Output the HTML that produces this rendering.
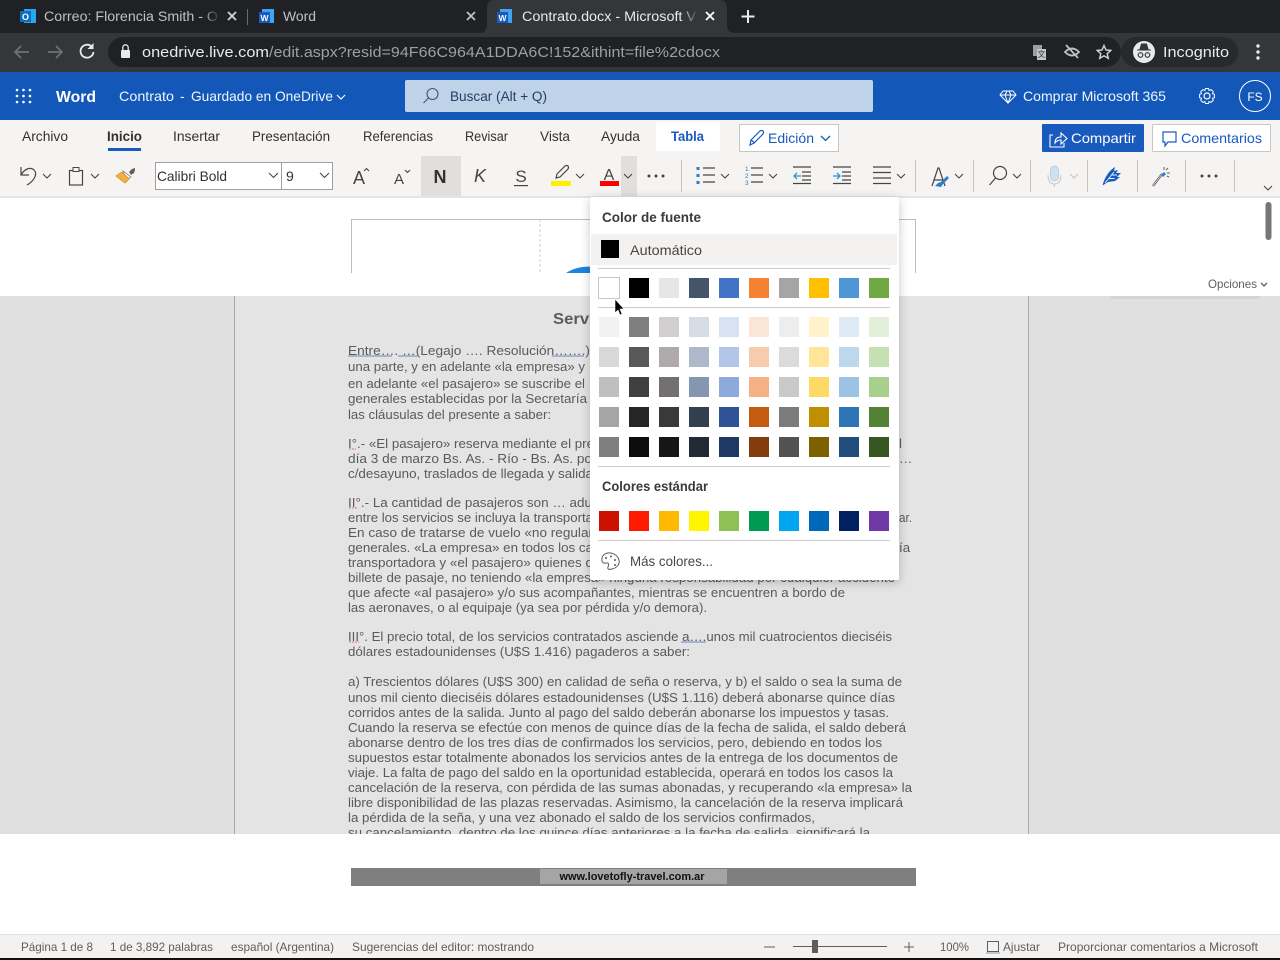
<!DOCTYPE html>
<html lang="es">
<head>
<meta charset="utf-8">
<title>Contrato.docx - Microsoft Word</title>
<style>
html,body{margin:0;padding:0;background:#fff;width:1280px;height:960px;overflow:hidden}
svg{display:block;font-family:"Liberation Sans",sans-serif}
.d{filter:blur(.3px)}
.d text{font-size:13.3px;fill:#5a5a5a}
.u{font-size:14px;fill:#323130}
.s{font-size:12px;fill:#605e5c}
.i{fill:none;stroke:#484644;stroke-width:1.2}
.c{fill:none;stroke:#484644;stroke-width:1.1}
.w{fill:none;stroke:#fff;stroke-width:1.2}
.g{fill:none;stroke:#c8c6c4;stroke-width:1}
</style>
</head>
<body>
<svg width="1280" height="960" viewBox="0 0 1280 960" xmlns="http://www.w3.org/2000/svg">
<defs>
<linearGradient id="f1"><stop offset="0" stop-color="#202124" stop-opacity="0"/><stop offset="1" stop-color="#202124"/></linearGradient>
<linearGradient id="f2"><stop offset="0" stop-color="#35363a" stop-opacity="0"/><stop offset="1" stop-color="#35363a"/></linearGradient>
</defs>
<!-- browser chrome -->
<rect width="1280" height="33" fill="#202124"/>
<rect y="33" width="1280" height="39" fill="#35363a"/>
<path d="M479 33q8 0 8-8V8q0-8 8-8h224q8 0 8 8v17q0 8 8 8z" fill="#35363a"/>
<rect x="247" y="9" width="1" height="16" fill="#6b6c6f"/>
<!-- tab 1 -->
<rect x="24" y="9" width="12" height="14" fill="#28a8ea"/><rect x="20" y="11" width="11" height="11" fill="#0f6cbd"/>
<text x="25.500" y="20" font-size="9" font-weight="bold" fill="#fff" text-anchor="middle">O</text>
<text x="44" y="21" font-size="13.500" fill="#bdc1c6" textLength="174" lengthAdjust="spacingAndGlyphs">Correo: Florencia Smith - O</text>
<rect x="204" y="8" width="16" height="18" fill="url(#f1)"/>
<path d="M228 12l8 8M236 12l-8 8" stroke="#d5d6d8" stroke-width="1.800" fill="none"/>
<!-- tab 2 -->
<rect x="262" y="9" width="12" height="14" fill="#41a5ee"/><rect x="259" y="12" width="11" height="11" fill="#185abd"/>
<text x="264.500" y="21" font-size="8.500" font-weight="bold" fill="#fff" text-anchor="middle">W</text>
<text x="283" y="21" font-size="13.500" fill="#bdc1c6" textLength="33" lengthAdjust="spacingAndGlyphs">Word</text>
<path d="M467 12l8 8M475 12l-8 8" stroke="#bdc1c6" stroke-width="1.800" fill="none"/>
<!-- tab 3 -->
<rect x="500" y="9" width="12" height="14" fill="#41a5ee"/><rect x="497" y="12" width="11" height="11" fill="#185abd"/>
<text x="502.500" y="21" font-size="8.500" font-weight="bold" fill="#fff" text-anchor="middle">W</text>
<text x="522" y="21" font-size="13.500" fill="#e8eaed" textLength="174" lengthAdjust="spacingAndGlyphs">Contrato.docx - Microsoft V</text>
<rect x="682" y="8" width="16" height="18" fill="url(#f2)"/>
<path d="M706 12l8 8M714 12l-8 8" stroke="#fff" stroke-width="1.800" fill="none"/>
<path d="M748 10v13M741.500 16.500h13" stroke="#e8eaed" stroke-width="2" fill="none"/>
<!-- toolbar -->
<path d="M29 52H16M21 46l-6 6 6 6" fill="none" stroke="#707174" stroke-width="1.700"/>
<path d="M48 52h13M56 46l6 6-6 6" fill="none" stroke="#707174" stroke-width="1.700"/>
<path d="M92 47a6.500 6.500 0 1 0 1.500 5" fill="none" stroke="#e8eaed" stroke-width="1.800"/><path d="M93.500 43v6h-6z" fill="#e8eaed"/>
<rect x="108" y="37" width="1013" height="30" rx="15" fill="#202124"/>
<rect x="1121" y="37" width="117" height="30" rx="15" fill="#28292c"/>
<rect x="121" y="50" width="9" height="8" rx="1" fill="#e8eaed"/><path d="M122.800 50v-2.500a2.700 2.700 0 0 1 5.400 0V50" fill="none" stroke="#e8eaed" stroke-width="1.300"/>
<text x="142" y="57" font-size="15" fill="#e8eaed" textLength="127" lengthAdjust="spacingAndGlyphs">onedrive.live.com</text>
<text x="269" y="57" font-size="15" fill="#9aa0a6" textLength="451" lengthAdjust="spacingAndGlyphs">/edit.aspx?resid=94F66C964A1DDA6C!152&amp;ithint=file%2cdocx</text>
<!-- translate / eye / star -->
<rect x="1033" y="45" width="9" height="11" fill="#9aa0a6"/><rect x="1037" y="49" width="9" height="11" fill="#c4c7ca"/><text x="1037.500" y="57" font-size="8" fill="#35363a" style="font-family:'Liberation Sans','Noto Sans CJK SC',sans-serif">文</text>
<path d="M1065 52q7-7 14 0q-7 7-14 0zM1066 45l12 13" fill="none" stroke="#bdc1c6" stroke-width="1.800"/>
<path d="M1104 45.500l2 4.500 4.800.4-3.600 3.200 1.100 4.700-4.300-2.500-4.300 2.500 1.100-4.700-3.600-3.200 4.800-.4z" fill="none" stroke="#d5d6d8" stroke-width="1.400"/>
<circle cx="1144" cy="52" r="11" fill="#e8eaed"/>
<path d="M1137 50h14M1140 49l1.500-5h5l1.500 5z" fill="#35363a" stroke="#35363a"/><circle cx="1140.500" cy="55" r="2.300" fill="none" stroke="#35363a" stroke-width="1.200"/><circle cx="1147.500" cy="55" r="2.300" fill="none" stroke="#35363a" stroke-width="1.200"/>
<text x="1163" y="57" font-size="15" fill="#e8eaed" textLength="66" lengthAdjust="spacingAndGlyphs">Incognito</text>
<circle cx="1258" cy="46" r="1.700" fill="#e8eaed"/><circle cx="1258" cy="52" r="1.700" fill="#e8eaed"/><circle cx="1258" cy="58" r="1.700" fill="#e8eaed"/>
<!-- word blue bar -->
<rect y="72" width="1280" height="48" fill="#1358b8"/>
<g fill="#fff"><circle cx="17" cy="90" r="1.300"/><circle cx="23.500" cy="90" r="1.300"/><circle cx="30" cy="90" r="1.300"/><circle cx="17" cy="96" r="1.300"/><circle cx="23.500" cy="96" r="1.300"/><circle cx="30" cy="96" r="1.300"/><circle cx="17" cy="102" r="1.300"/><circle cx="23.500" cy="102" r="1.300"/><circle cx="30" cy="102" r="1.300"/></g>
<text x="56" y="102" font-size="16" font-weight="bold" fill="#fff" textLength="40" lengthAdjust="spacingAndGlyphs">Word</text>
<text x="119" y="101" font-size="14" fill="#f0f5fb" textLength="55" lengthAdjust="spacingAndGlyphs">Contrato</text>
<text x="180" y="101" font-size="14" fill="#f0f5fb">-</text>
<text x="191" y="101" font-size="14" fill="#f0f5fb" textLength="142" lengthAdjust="spacingAndGlyphs">Guardado en OneDrive</text>
<path d="M337 95l4 4 4-4" class="w"/>
<rect x="405" y="80" width="468" height="32" rx="2" fill="#bfd3e8"/>
<circle cx="432.500" cy="94" r="5.500" fill="none" stroke="#44546a" stroke-width="1.100"/><path d="M428.500 98l-5 5" stroke="#44546a" stroke-width="1.100"/>
<text x="450" y="101" font-size="13.500" fill="#243d63" textLength="97" lengthAdjust="spacingAndGlyphs">Buscar (Alt + Q)</text>
<path d="M1003 91h10l3 4-8 8-8-8zM1000 95h16M1005 95l3 8 3-8M1005 95l2-4M1011 95l-2-4" fill="none" stroke="#fff" stroke-width="1"/>
<text x="1023" y="101" font-size="14" fill="#f0f5fb" textLength="143" lengthAdjust="spacingAndGlyphs">Comprar Microsoft 365</text>
<circle cx="1207" cy="96" r="3" class="w"/><path d="M1205.500 88.500h3l.6 2 2-.9 2.200 2.100-.9 2 2 .6v3.400l-2 .6.9 2-2.200 2.100-2-.9-.6 2h-3l-.6-2-2 .9-2.200-2.100.9-2-2-.6v-3.400l2-.6-.9-2 2.200-2.100 2 .9z" fill="none" stroke="#fff" stroke-width="1"/>
<circle cx="1255" cy="96" r="15.500" fill="#1358b8" stroke="#fff" stroke-width="1"/>
<text x="1255" y="101" font-size="12" fill="#fff" text-anchor="middle">FS</text>
<!-- ribbon -->
<rect y="120" width="1280" height="77" fill="#f5f4f2"/>
<rect y="196" width="1280" height="2" fill="#e6e5e3"/>
<rect x="656" y="122" width="64" height="29" fill="#fff"/>
<text class="u" x="22" y="141" textLength="46" lengthAdjust="spacingAndGlyphs">Archivo</text>
<text class="u" x="107" y="141" textLength="35" lengthAdjust="spacingAndGlyphs" style="font-weight:600">Inicio</text>
<rect x="108" y="148" width="33" height="3" fill="#185abd"/>
<text class="u" x="173" y="141" textLength="47" lengthAdjust="spacingAndGlyphs">Insertar</text>
<text class="u" x="252" y="141" textLength="78" lengthAdjust="spacingAndGlyphs">Presentación</text>
<text class="u" x="363" y="141" textLength="70" lengthAdjust="spacingAndGlyphs">Referencias</text>
<text class="u" x="465" y="141" textLength="43" lengthAdjust="spacingAndGlyphs">Revisar</text>
<text class="u" x="540" y="141" textLength="30" lengthAdjust="spacingAndGlyphs">Vista</text>
<text class="u" x="601" y="141" textLength="39" lengthAdjust="spacingAndGlyphs">Ayuda</text>
<text x="671" y="141" font-size="14" font-weight="bold" fill="#185abd" textLength="33" lengthAdjust="spacingAndGlyphs">Tabla</text>
<rect x="739.500" y="124.500" width="99" height="27" fill="#fff" stroke="#c8c6c4"/>
<path d="M750 145l1-5 9-9q2-1 3 0t0 3l-9 9zM751 140l4 3" fill="none" stroke="#185abd" stroke-width="1.200"/>
<text x="768" y="143" font-size="14" fill="#185abd" textLength="46" lengthAdjust="spacingAndGlyphs">Edición</text>
<path d="M821 136l4.500 4.500 4.500-4.500" fill="none" stroke="#185abd" stroke-width="1.300"/>
<rect x="1042" y="124" width="102" height="28" rx="1" fill="#185abd"/>
<path d="M1053 135h-3v12h14v-4M1055 143q0-6 6-6v-4l6 5.500-6 5.500v-4q-4 0-6 3z" fill="none" stroke="#fff" stroke-width="1.100"/>
<text x="1071" y="143" font-size="14" fill="#fff" textLength="65" lengthAdjust="spacingAndGlyphs">Compartir</text>
<rect x="1152.500" y="124.500" width="118" height="27" rx="1" fill="#fff" stroke="#c8c6c4"/>
<path d="M1163 132h13v10h-8l-3 4v-4h-2z" fill="none" stroke="#185abd" stroke-width="1.200"/>
<text x="1181" y="143" font-size="14" fill="#185abd" textLength="81" lengthAdjust="spacingAndGlyphs">Comentarios</text>
<!-- toolbar icons -->
<path d="M21 167v8h8M21 175C25 168 31 167 34 170C38 174 34 181 27 185" class="i"/>
<rect x="155.500" y="162.500" width="126" height="27" fill="#fff" stroke="#a19f9d"/>
<rect x="281.500" y="162.500" width="51" height="27" fill="#fff" stroke="#a19f9d"/>
<rect x="621" y="156" width="16" height="40" fill="#e1dfdd"/>
<path d="M43 174l4 4 4-4M91 174l4 4 4-4M269 173l4.500 4.500 4.500-4.500M320 173l4.500 4.500 4.500-4.500M576 174l4 4 4-4M624 174l4 4 4-4M721 174l4 4 4-4M769 174l4 4 4-4M897 174l4 4 4-4M955 174l4 4 4-4M1013 174l4 4 4-4" class="c"/>
<path d="M1070 174l4 4 4-4" fill="none" stroke="#c8c6c4" stroke-width="1.100"/>
<path d="M1264 186l4 4 4-4" class="c"/>
<rect x="69.500" y="170.500" width="13" height="14.500" class="i"/><rect x="73" y="167.500" width="6" height="4" fill="#f5f4f2" stroke="#484644"/>
<path d="M129 172l3-3 3-1v2l-1 3-3 2z" fill="#605e5c"/><path d="M123 171l8 6-5 3z" fill="#fff" stroke="#8a8886" stroke-width=".8"/><path d="M122 172l7 7-4 4-9-7z" fill="#f5b041" stroke="#d98e1f" stroke-width=".8"/>
<text class="u" x="157" y="181" textLength="70" lengthAdjust="spacingAndGlyphs">Calibri Bold</text>
<text class="u" x="286" y="181">9</text>
<text x="353" y="184" font-size="18" fill="#484644">A</text><path d="M364 171l2.500-2.500 2.500 2.500" class="c"/>
<text x="394" y="184" font-size="15" fill="#484644">A</text><path d="M405 170l2.500 2.500 2.500-2.500" class="c"/>
<rect x="421" y="156" width="40" height="40" fill="#e1dfdd"/>
<text x="440" y="183" font-size="18" font-weight="bold" fill="#323130" text-anchor="middle">N</text>
<text x="480" y="182" font-size="18" font-style="italic" fill="#484644" text-anchor="middle">K</text>
<text x="521" y="182" font-size="17" fill="#484644" text-anchor="middle">S</text><rect x="514" y="185" width="14" height="1.200" fill="#484644"/>
<path d="M556 178l1-4 8-8q2-1 3 0t0 3l-8 8z" class="i"/><rect x="551" y="181" width="20" height="5" fill="#ffee00"/>
<text x="609" y="180" font-size="16" fill="#484644" text-anchor="middle">A</text><rect x="600" y="181" width="19" height="5" fill="#f00"/>
<g fill="#484644"><circle cx="649" cy="176" r="1.500"/><circle cx="656" cy="176" r="1.500"/><circle cx="663" cy="176" r="1.500"/><circle cx="1202" cy="176" r="1.500"/><circle cx="1209" cy="176" r="1.500"/><circle cx="1216" cy="176" r="1.500"/></g>
<path d="M681.500 160v32M915.500 160v32M973.500 160v32M1030.500 160v32M1087.500 160v32M1137.500 160v32M1185.500 160v32M1234.500 160v32" class="g"/>
<path d="M703 168h12M703 175h12M703 182h12" class="i"/><rect x="696.500" y="167" width="3" height="3" fill="#2b7cd3"/><rect x="696.500" y="174" width="3" height="3" fill="#2b7cd3"/><rect x="696.500" y="181" width="3" height="3" fill="#2b7cd3"/>
<path d="M751 168h12M751 175h12M751 182h12" class="i"/><text x="745" y="171" font-size="6.500" fill="#2b7cd3">1</text><text x="745" y="178" font-size="6.500" fill="#2b7cd3">2</text><text x="745" y="185" font-size="6.500" fill="#2b7cd3">3</text>
<path d="M793 167h18M802 172h9M802 176h9M802 180h9M793 183.500h18" class="i"/><path d="M801 176h-7M797 173l-3 3 3 3" fill="none" stroke="#2b95d3" stroke-width="1.300"/>
<path d="M833 167h18M842 172h9M842 176h9M842 180h9M833 183.500h18" class="i"/><path d="M833 176h7M837 173l3 3-3 3" fill="none" stroke="#2b95d3" stroke-width="1.300"/>
<path d="M873 167h18M873 172.500h18M873 178h18M873 183.500h18" class="i"/>
<path d="M932 186l6-18h1l6 18M934.500 180h9" class="i"/><path d="M935 186l3-3 3-1 6-6 2 2-6 6-2 3z" fill="#2b7cd3"/>
<circle cx="1000" cy="173" r="6.500" class="i"/><path d="M995.500 178l-6 7" class="i"/>
<rect x="1050.500" y="166" width="8" height="15" rx="4" fill="#cfe0ef" stroke="#bcd0e3"/><path d="M1048 175q0 9 6.500 9t6.500-9M1054.500 184v3" fill="none" stroke="#c8c6c4"/>
<path d="M1102.500 185.500C1105 176 1110 170 1115 167L1114 171L1118 170L1116 173L1121 173L1117 177L1120 177L1115 181L1108 182Z" fill="#185abd"/><path d="M1105 183l9-11M1111 175h6M1108.500 178.500h6" stroke="#f5f4f2" stroke-width=".9" fill="none"/>
<path d="M1153 186l9-12" stroke="#484644" stroke-width="2.200" fill="none"/><path d="M1153 186l9-12" stroke="#f5f4f2" stroke-width=".7" fill="none"/><path d="M1161 175l3-3 2 2-3 3z" fill="#2b7cd3"/><path d="M1164 167v3M1170 173h-3M1168 168l-2 2M1169 177l-2-1" fill="none" stroke="#605e5c"/>
<!-- document -->
<rect y="198" width="1280" height="98" fill="#fff"/>
<rect x="351.500" y="219.500" width="564" height="60" fill="#fff" stroke="#bdbdbd"/>
<rect x="350" y="273" width="568" height="8" fill="#fff"/>
<path d="M540 219v54" stroke="#cfcfcf" stroke-dasharray="3 2"/>
<path d="M566 273q12-8 30-6v6z" fill="#1b84e0"/>
<rect x="1265.500" y="202" width="6" height="38" rx="3" fill="#767676"/>
<text x="1208" y="288" font-size="12" fill="#605e5c" textLength="49" lengthAdjust="spacingAndGlyphs">Opciones</text>
<path d="M1261 283l3 3 3-3" fill="none" stroke="#605e5c" stroke-width="1.300"/>
<!-- grey page area -->
<rect y="296" width="1280" height="538" fill="#e0e0e0"/>
<rect x="235" y="296" width="793" height="538" fill="#e4e4e4"/>
<rect x="234" y="296" width="1" height="538" fill="#a8a8a8"/>
<rect x="1028" y="296" width="1" height="538" fill="#a8a8a8"/>
<rect x="1110" y="296" width="150" height="3" rx="2" fill="#d4d4d4"/>
<text x="553" y="324" font-size="16" font-weight="bold" fill="#5c5c5c" textLength="50" lengthAdjust="spacingAndGlyphs">Servic</text>
<g class="d">
<text x="348" y="355" textLength="242" lengthAdjust="spacingAndGlyphs">Entre…. …(Legajo …. Resolución…….)</text>
<text x="348" y="371" textLength="237" lengthAdjust="spacingAndGlyphs">una parte, y en adelante «la empresa» y</text>
<text x="348" y="388" textLength="237" lengthAdjust="spacingAndGlyphs">en adelante «el pasajero» se suscribe el</text>
<text x="348" y="403" textLength="239" lengthAdjust="spacingAndGlyphs">generales establecidas por la Secretaría</text>
<text x="348" y="419" textLength="203" lengthAdjust="spacingAndGlyphs">las cláusulas del presente a saber:</text>
<text x="348" y="448" textLength="246" lengthAdjust="spacingAndGlyphs">I°.- «El pasajero» reserva mediante el pre</text>
<text x="348" y="463" textLength="244" lengthAdjust="spacingAndGlyphs">día 3 de marzo Bs. As. - Río - Bs. As. po</text>
<text x="348" y="478" textLength="245" lengthAdjust="spacingAndGlyphs">c/desayuno, traslados de llegada y salida</text>
<text x="348" y="507" textLength="244" lengthAdjust="spacingAndGlyphs">II°.- La cantidad de pasajeros son … adu</text>
<text x="348" y="522" textLength="245" lengthAdjust="spacingAndGlyphs">entre los servicios se incluya la transporta</text>
<text x="348" y="537" textLength="245" lengthAdjust="spacingAndGlyphs">En caso de tratarse de vuelo «no regular</text>
<text x="348" y="552" textLength="245" lengthAdjust="spacingAndGlyphs">generales. «La empresa» en todos los ca</text>
<text x="348" y="567" textLength="245" lengthAdjust="spacingAndGlyphs">transportadora y «el pasajero» quienes q</text>
<text x="348" y="582" textLength="547" lengthAdjust="spacingAndGlyphs">billete de pasaje, no teniendo «la empresa» ninguna responsabilidad por cualquier accidente</text>
<text x="348" y="597" textLength="497" lengthAdjust="spacingAndGlyphs">que afecte «al pasajero» y/o sus acompañantes, mientras se encuentren a bordo de</text>
<text x="348" y="612" textLength="359" lengthAdjust="spacingAndGlyphs">las aeronaves, o al equipaje (ya sea por pérdida y/o demora).</text>
<text x="348" y="641" textLength="544" lengthAdjust="spacingAndGlyphs">III°. El precio total, de los servicios contratados asciende a….unos mil cuatrocientos dieciséis</text>
<text x="348" y="656" textLength="342" lengthAdjust="spacingAndGlyphs">dólares estadounidenses (U$S 1.416) pagaderos a saber:</text>
<text x="348" y="686" textLength="554" lengthAdjust="spacingAndGlyphs">a) Trescientos dólares (U$S 300) en calidad de seña o reserva, y b) el saldo o sea la suma de</text>
<text x="348" y="702" textLength="547" lengthAdjust="spacingAndGlyphs">unos mil ciento dieciséis dólares estadounidenses (U$S 1.116) deberá abonarse quince días</text>
<text x="348" y="717" textLength="541" lengthAdjust="spacingAndGlyphs">corridos antes de la salida. Junto al pago del saldo deberán abonarse los impuestos y tasas.</text>
<text x="348" y="732" textLength="558" lengthAdjust="spacingAndGlyphs">Cuando la reserva se efectúe con menos de quince días de la fecha de salida, el saldo deberá</text>
<text x="348" y="747" textLength="534" lengthAdjust="spacingAndGlyphs">abonarse dentro de los tres días de confirmados los servicios, pero, debiendo en todos los</text>
<text x="348" y="762" textLength="550" lengthAdjust="spacingAndGlyphs">supuestos estar totalmente abonados los servicios antes de la entrega de los documentos de</text>
<text x="348" y="777" textLength="545" lengthAdjust="spacingAndGlyphs">viaje. La falta de pago del saldo en la oportunidad establecida, operará en todos los casos la</text>
<text x="348" y="792" textLength="564" lengthAdjust="spacingAndGlyphs">cancelación de la reserva, con pérdida de las sumas abonadas, y recuperando «la empresa» la</text>
<text x="348" y="807" textLength="555" lengthAdjust="spacingAndGlyphs">libre disponibilidad de las plazas reservadas. Asimismo, la cancelación de la reserva implicará</text>
<text x="348" y="822" textLength="467" lengthAdjust="spacingAndGlyphs">la pérdida de la seña, y una vez abonado el saldo de los servicios confirmados,</text>
<text x="348" y="837" textLength="522" lengthAdjust="spacingAndGlyphs">su cancelamiento, dentro de los quince días anteriores a la fecha de salida, significará la</text>
<text x="899" y="448">l</text>
<text x="899" y="463">…</text>
<text x="899" y="522" textLength="13" lengthAdjust="spacingAndGlyphs">ar.</text>
<text x="899" y="552">ía</text>
</g>
<path d="M348 356h44M398 356h21M552 356h32M681 642h25" stroke="#6f7fc0" stroke-width="1"/>
<path d="M349 449h7M349 508h9M349 642h10" stroke="#d87070" stroke-width="1" stroke-dasharray="2 1"/>
<!-- bottom white area -->
<rect y="834" width="1280" height="101" fill="#fff"/>
<rect x="351" y="868" width="565" height="18" fill="#7f7f7f"/>
<rect x="540" y="869" width="187" height="15" fill="#a5a5a5"/>
<text x="632" y="880" font-size="11" font-weight="bold" fill="#111" text-anchor="middle" textLength="145" lengthAdjust="spacingAndGlyphs">www.lovetofly-travel.com.ar</text>
<!-- status bar -->
<rect y="935" width="1280" height="25" fill="#f3f2f1"/>
<rect y="934" width="1280" height="1" fill="#e1dfdd"/>
<rect y="958" width="1280" height="2" fill="#111"/>
<text class="s" x="21" y="951" textLength="72" lengthAdjust="spacingAndGlyphs">Página 1 de 8</text>
<text class="s" x="110" y="951" textLength="103" lengthAdjust="spacingAndGlyphs">1 de 3,892 palabras</text>
<text class="s" x="231" y="951" textLength="103" lengthAdjust="spacingAndGlyphs">español (Argentina)</text>
<text class="s" x="352" y="951" textLength="182" lengthAdjust="spacingAndGlyphs">Sugerencias del editor: mostrando</text>
<path d="M764 947h11M793 946.500h94M904 947h10M909 942v10" stroke="#605e5c" stroke-width="1" fill="none"/>
<rect x="812" y="940" width="6" height="13" fill="#605e5c"/>
<text class="s" x="940" y="951" textLength="29" lengthAdjust="spacingAndGlyphs">100%</text>
<rect x="987.500" y="941.500" width="11" height="10" fill="none" stroke="#605e5c"/><path d="M986 953h14" stroke="#7a9cc6"/>
<text class="s" x="1003" y="951" textLength="37" lengthAdjust="spacingAndGlyphs">Ajustar</text>
<text class="s" x="1058" y="951" textLength="200" lengthAdjust="spacingAndGlyphs">Proporcionar comentarios a Microsoft</text>
<!-- popup -->
<rect x="590" y="197" width="309" height="383" rx="2" fill="#fff" style="filter:drop-shadow(0 2px 5px rgba(0,0,0,.22))"/>
<text x="602" y="222" font-size="13.500" font-weight="bold" fill="#3b3a39" textLength="99" lengthAdjust="spacingAndGlyphs">Color de fuente</text>
<rect x="591" y="234" width="306" height="31" fill="#f3f2f1"/>
<rect x="601" y="240" width="18" height="18" fill="#000"/>
<text x="630" y="255" font-size="14" fill="#484644" textLength="72" lengthAdjust="spacingAndGlyphs">Automático</text>
<path d="M598 268.500h292M598 307.500h292M598 466.500h292M598 540.500h292" stroke="#cfcdcb" stroke-width="1"/>
<!-- theme colours -->
<rect x="598.500" y="277.500" width="21" height="21" fill="#fff" stroke="#c8c6c4"/>
<rect x="629" y="278" width="20" height="20" fill="#000"/><rect x="659" y="278" width="20" height="20" fill="#e7e6e6"/><rect x="689" y="278" width="20" height="20" fill="#44546a"/><rect x="719" y="278" width="20" height="20" fill="#4472c4"/><rect x="749" y="278" width="20" height="20" fill="#f58231"/><rect x="779" y="278" width="20" height="20" fill="#a5a5a5"/><rect x="809" y="278" width="20" height="20" fill="#ffc000"/><rect x="839" y="278" width="20" height="20" fill="#4f94d4"/><rect x="869" y="278" width="20" height="20" fill="#70a845"/>
<rect x="599" y="317" width="20" height="20" fill="#f2f2f2"/><rect x="629" y="317" width="20" height="20" fill="#7f7f7f"/><rect x="659" y="317" width="20" height="20" fill="#d0cece"/><rect x="689" y="317" width="20" height="20" fill="#d6dce4"/><rect x="719" y="317" width="20" height="20" fill="#d9e2f3"/><rect x="749" y="317" width="20" height="20" fill="#fbe5d5"/><rect x="779" y="317" width="20" height="20" fill="#ededed"/><rect x="809" y="317" width="20" height="20" fill="#fff2cc"/><rect x="839" y="317" width="20" height="20" fill="#deeaf6"/><rect x="869" y="317" width="20" height="20" fill="#e2efd9"/>
<rect x="599" y="347" width="20" height="20" fill="#d8d8d8"/><rect x="629" y="347" width="20" height="20" fill="#595959"/><rect x="659" y="347" width="20" height="20" fill="#aeaaaa"/><rect x="689" y="347" width="20" height="20" fill="#adb9ca"/><rect x="719" y="347" width="20" height="20" fill="#b4c6e7"/><rect x="749" y="347" width="20" height="20" fill="#f7cbac"/><rect x="779" y="347" width="20" height="20" fill="#dbdbdb"/><rect x="809" y="347" width="20" height="20" fill="#fee599"/><rect x="839" y="347" width="20" height="20" fill="#bdd7ee"/><rect x="869" y="347" width="20" height="20" fill="#c5e0b3"/>
<rect x="599" y="377" width="20" height="20" fill="#bfbfbf"/><rect x="629" y="377" width="20" height="20" fill="#3f3f3f"/><rect x="659" y="377" width="20" height="20" fill="#757070"/><rect x="689" y="377" width="20" height="20" fill="#8496b0"/><rect x="719" y="377" width="20" height="20" fill="#8eaadb"/><rect x="749" y="377" width="20" height="20" fill="#f4b183"/><rect x="779" y="377" width="20" height="20" fill="#c9c9c9"/><rect x="809" y="377" width="20" height="20" fill="#ffd966"/><rect x="839" y="377" width="20" height="20" fill="#9cc3e5"/><rect x="869" y="377" width="20" height="20" fill="#a8d08d"/>
<rect x="599" y="407" width="20" height="20" fill="#a5a5a5"/><rect x="629" y="407" width="20" height="20" fill="#262626"/><rect x="659" y="407" width="20" height="20" fill="#3a3838"/><rect x="689" y="407" width="20" height="20" fill="#323f4f"/><rect x="719" y="407" width="20" height="20" fill="#2f5496"/><rect x="749" y="407" width="20" height="20" fill="#c55a11"/><rect x="779" y="407" width="20" height="20" fill="#7b7b7b"/><rect x="809" y="407" width="20" height="20" fill="#bf8f00"/><rect x="839" y="407" width="20" height="20" fill="#2e75b5"/><rect x="869" y="407" width="20" height="20" fill="#538135"/>
<rect x="599" y="437" width="20" height="20" fill="#7f7f7f"/><rect x="629" y="437" width="20" height="20" fill="#0c0c0c"/><rect x="659" y="437" width="20" height="20" fill="#171616"/><rect x="689" y="437" width="20" height="20" fill="#222a35"/><rect x="719" y="437" width="20" height="20" fill="#1f3864"/><rect x="749" y="437" width="20" height="20" fill="#833c0b"/><rect x="779" y="437" width="20" height="20" fill="#525252"/><rect x="809" y="437" width="20" height="20" fill="#7f6000"/><rect x="839" y="437" width="20" height="20" fill="#1e4e79"/><rect x="869" y="437" width="20" height="20" fill="#375623"/>
<text x="602" y="491" font-size="13.500" font-weight="bold" fill="#3b3a39" textLength="106" lengthAdjust="spacingAndGlyphs">Colores estándar</text>
<rect x="599" y="511" width="20" height="20" fill="#cc1100"/><rect x="629" y="511" width="20" height="20" fill="#ff1a00"/><rect x="659" y="511" width="20" height="20" fill="#ffb900"/><rect x="689" y="511" width="20" height="20" fill="#fff500"/><rect x="719" y="511" width="20" height="20" fill="#8dc153"/><rect x="749" y="511" width="20" height="20" fill="#009a52"/><rect x="779" y="511" width="20" height="20" fill="#00a6f0"/><rect x="809" y="511" width="20" height="20" fill="#0068b8"/><rect x="839" y="511" width="20" height="20" fill="#002060"/><rect x="869" y="511" width="20" height="20" fill="#703aa6"/>
<path d="M611 553c-6-1-10 3-9 8 1 3 3 2 5 2s2 2 1 4 1 3 4 2c5-1 8-5 7-9s-4-6-8-7z" fill="#fff" stroke="#605e5c" stroke-width="1"/><circle cx="606" cy="558" r="1" fill="#605e5c"/><circle cx="611" cy="556.500" r="1" fill="#605e5c"/><circle cx="615" cy="560" r="1" fill="#605e5c"/><circle cx="615" cy="565" r="1" fill="#605e5c"/>
<text x="630" y="566" font-size="14" fill="#484644" textLength="83" lengthAdjust="spacingAndGlyphs">Más colores...</text>
<!-- cursor -->
<path d="M615 299v14l3-3 2 5 2-1-2-5h4z" fill="#000" stroke="#fff" stroke-width=".6"/>
</svg>
</body>
</html>
